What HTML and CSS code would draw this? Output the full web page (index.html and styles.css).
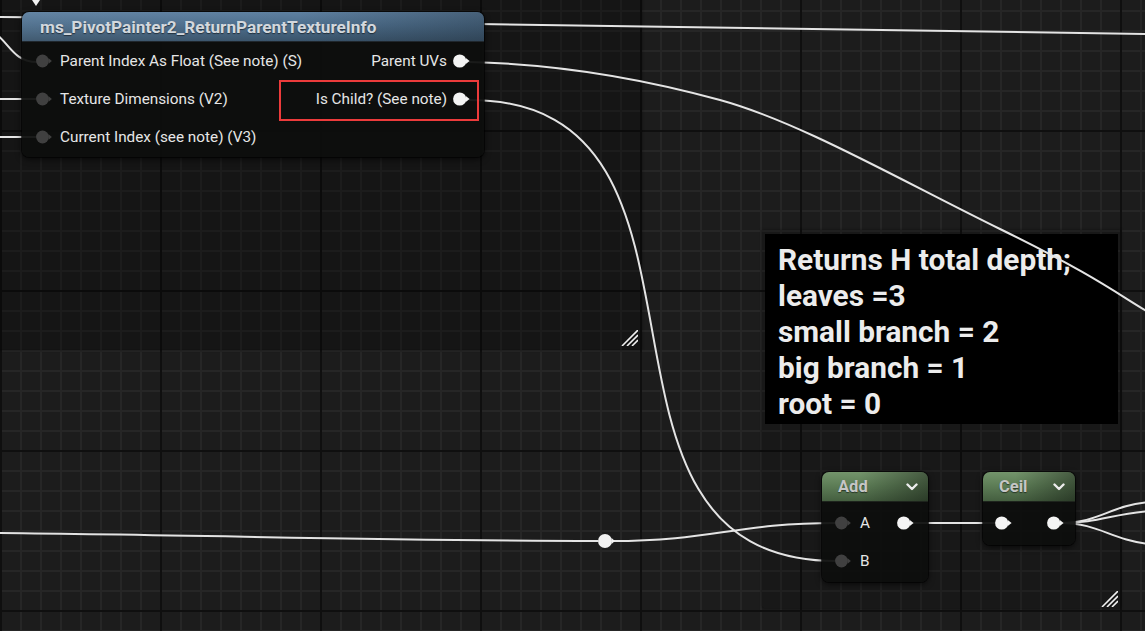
FILE: index.html
```html
<!DOCTYPE html>
<html>
<head>
<meta charset="utf-8">
<link rel="stylesheet" href="styles.css">
</head>
<body>
<div class="graph">
  <div class="comment comment-main">
    <svg class="resize" width="17" height="16" viewBox="0 0 17 16"><g stroke="#f2f2f2" stroke-width="1.6"><line x1="1" y1="16" x2="17" y2="0"/><line x1="6" y1="16" x2="17" y2="5"/><line x1="11" y1="16" x2="17" y2="10"/></g></svg>
  </div>
  <div class="comment comment-depth">
    <div class="comment-title">Returns H total depth;<br>leaves =3<br>small branch = 2<br>big branch = 1<br>root = 0</div>
    <svg class="resize" width="17" height="16" viewBox="0 0 17 16"><g stroke="#f2f2f2" stroke-width="1.6"><line x1="1" y1="16" x2="17" y2="0"/><line x1="6" y1="16" x2="17" y2="5"/><line x1="11" y1="16" x2="17" y2="10"/></g></svg>
  </div>

  <svg class="wires" width="1145" height="631" viewBox="0 0 1145 631">
    <g fill="none" stroke="#e4e4e4" stroke-width="2">
      <path d="M-10 17 C 300 18, 600 27, 1150 34"/>
      <path d="M-6 32 C 10 44, 14 62, 37 62"/>
      <path d="M-10 99 L37 99"/>
      <path d="M-10 137 L37 137"/>
      <path d="M469 62 C 560 64, 640 78, 720 100 S 900 180, 1000 229 S 1120 296, 1150 313"/>
      <path d="M469 100 C 753 100, 551 561, 836 561"/>
      <path d="M-10 533 C 200 535, 400 541, 598 541"/>
      <path d="M612 541 C 712 541, 736 523, 836 523"/>
      <path d="M911 523 L996 523"/>
      <path d="M1060 523 C 1100 523, 1110 505, 1150 502"/>
      <path d="M1060 523 C 1100 523, 1110 514, 1150 511"/>
      <path d="M1060 523 C 1100 523, 1110 540, 1150 544"/>
    </g>
    <path d="M32 0 L40 0 L36 6 Z" fill="#f0f0f0"/>
  </svg>

  <div class="node node-texinfo">
    <div class="node-header header-blue">ms_PivotPainter2_ReturnParentTextureInfo</div>
    <div class="node-body">
      <div class="row">
        <div class="pin-in"><svg class="pin" width="17" height="14" viewBox="0 0 17 14"><circle cx="6.5" cy="7" r="6.4" fill="#404040"/><path d="M12.6 4.2 L15.9 7 L12.6 9.8 Z" fill="#404040"/></svg><span class="label">Parent Index As Float (See note) (S)</span></div>
        <div class="pin-out"><span class="label">Parent UVs</span><svg class="pin" width="18" height="14" viewBox="0 0 18 14"><circle cx="6.7" cy="7" r="6.6" fill="#f4f4f4"/><path d="M12.8 4 L16.6 7 L12.8 10 Z" fill="#f4f4f4"/></svg></div>
      </div>
      <div class="row">
        <div class="pin-in"><svg class="pin" width="17" height="14" viewBox="0 0 17 14"><circle cx="6.5" cy="7" r="6.4" fill="#404040"/><path d="M12.6 4.2 L15.9 7 L12.6 9.8 Z" fill="#404040"/></svg><span class="label">Texture Dimensions (V2)</span></div>
        <div class="pin-out"><span class="label">Is Child? (See note)</span><svg class="pin" width="18" height="14" viewBox="0 0 18 14"><circle cx="6.7" cy="7" r="6.6" fill="#f4f4f4"/><path d="M12.8 4 L16.6 7 L12.8 10 Z" fill="#f4f4f4"/></svg></div>
      </div>
      <div class="row">
        <div class="pin-in"><svg class="pin" width="17" height="14" viewBox="0 0 17 14"><circle cx="6.5" cy="7" r="6.4" fill="#404040"/><path d="M12.6 4.2 L15.9 7 L12.6 9.8 Z" fill="#404040"/></svg><span class="label">Current Index (see note) (V3)</span></div>
      </div>
    </div>
  </div>

  <div class="highlight"></div>

  <div class="node node-add">
    <div class="node-header header-green"><span>Add</span><svg class="chev" width="12" height="8" viewBox="0 0 12 8"><path d="M1.5 1.5 L6 6 L10.5 1.5" fill="none" stroke="#ececec" stroke-width="2.4" stroke-linecap="round" stroke-linejoin="round"/></svg></div>
    <div class="node-body small-body">
      <div class="row small-row">
        <div class="pin-in"><svg class="pin" width="17" height="14" viewBox="0 0 17 14"><circle cx="6.5" cy="7" r="6.4" fill="#404040"/><path d="M12.6 4.2 L15.9 7 L12.6 9.8 Z" fill="#404040"/></svg><span class="label">A</span></div>
        <div class="pin-out"><svg class="pin" width="18" height="14" viewBox="0 0 18 14"><circle cx="6.7" cy="7" r="6.6" fill="#f4f4f4"/><path d="M12.8 4 L16.6 7 L12.8 10 Z" fill="#f4f4f4"/></svg></div>
      </div>
      <div class="row small-row">
        <div class="pin-in"><svg class="pin" width="17" height="14" viewBox="0 0 17 14"><circle cx="6.5" cy="7" r="6.4" fill="#404040"/><path d="M12.6 4.2 L15.9 7 L12.6 9.8 Z" fill="#404040"/></svg><span class="label">B</span></div>
      </div>
    </div>
  </div>

  <div class="node node-ceil">
    <div class="node-header header-green"><span>Ceil</span><svg class="chev" width="12" height="8" viewBox="0 0 12 8"><path d="M1.5 1.5 L6 6 L10.5 1.5" fill="none" stroke="#ececec" stroke-width="2.4" stroke-linecap="round" stroke-linejoin="round"/></svg></div>
    <div class="node-body small-body">
      <div class="row small-row">
        <div class="pin-in"><svg class="pin" width="18" height="14" viewBox="0 0 18 14"><circle cx="6.7" cy="7" r="6.6" fill="#f4f4f4"/><path d="M12.8 4 L16.6 7 L12.8 10 Z" fill="#f4f4f4"/></svg></div>
        <div class="pin-out"><svg class="pin" width="18" height="14" viewBox="0 0 18 14"><circle cx="6.7" cy="7" r="6.6" fill="#f4f4f4"/><path d="M12.8 4 L16.6 7 L12.8 10 Z" fill="#f4f4f4"/></svg></div>
      </div>
    </div>
  </div>

  <svg class="reroute" width="20" height="16" viewBox="0 0 20 16"><circle cx="8" cy="8" r="7" fill="#f2f2f2"/><path d="M14.5 5 L18 8 L14.5 11 Z" fill="#f2f2f2"/></svg>
</div>
</body>
</html>
```

FILE: styles.css
```css
* { box-sizing: border-box; }

body {
  margin: 0;
  background: #1c1c1c;
  font-family: Roboto, "Liberation Sans", sans-serif;
}

.graph {
  position: relative;
  width: 1145px;
  height: 631px;
  overflow: hidden;
  background-color: #1c1c1c;
  background-image:
    linear-gradient(to right, #0f0f0f 0 2px, transparent 2px),
    linear-gradient(to bottom, #0f0f0f 0 2px, transparent 2px),
    linear-gradient(to right, #262626 0 2px, transparent 2px),
    linear-gradient(to bottom, #262626 0 2px, transparent 2px);
  background-size: 160px 160px, 160px 160px, 20px 20px, 20px 20px;
  background-position: 0 0, 0 130px, 0 0, 0 10px;
}

/* comments */
.comment {
  position: absolute;
  border-radius: 2px;
}

.comment-main {
  left: -10px;
  top: -10px;
  width: 652px;
  height: 359px;
  background: rgba(0, 0, 0, 0.24);
  box-shadow: 0 1px 3px rgba(0, 0, 0, 0.45);
}

.comment-depth {
  left: 762px;
  top: 230px;
  width: 359px;
  height: 378px;
  padding: 4px 3px 0 3px;
  background: rgba(0, 0, 0, 0.14);
  box-shadow: 0 0 3px rgba(0, 0, 0, 0.5);
}

.comment-title {
  background: #000;
  height: 190px;
  padding: 8px 13px 0;
  color: #ececec;
  font-weight: 700;
  font-size: 29.8px;
  line-height: 36px;
  white-space: nowrap;
}

.resize {
  position: absolute;
  display: block;
}

.comment-main .resize { right: 4px; bottom: 3px; }
.comment-depth .resize { right: 3px; bottom: 1px; }

/* wires */
.wires {
  position: absolute;
  left: 0;
  top: 0;
  display: block;
}

/* nodes */
.node {
  position: absolute;
  border-radius: 7px;
  background: rgba(13, 14, 13, 0.94);
  box-shadow: 0 2px 6px rgba(0, 0, 0, 0.7), 0 0 0 1px rgba(0, 0, 0, 0.6);
  overflow: hidden;
  color: #e4e4e4;
}

.node-texinfo {
  left: 22px;
  top: 12px;
  width: 462px;
  height: 145px;
}

.node-add {
  left: 822px;
  top: 472px;
  width: 106px;
  height: 110px;
}

.node-ceil {
  left: 983px;
  top: 472px;
  width: 92px;
  height: 73px;
}

.node-header {
  height: 30px;
  display: flex;
  align-items: center;
  font-weight: 700;
  text-shadow: 0 1px 1px rgba(0, 0, 0, 0.5);
}

.header-blue {
  padding-left: 18px;
  font-size: 17.2px;
  color: #d3d8dd;
  background:
    linear-gradient(to right, rgba(255,255,255,0.04) 0%, rgba(255,255,255,0) 60%, rgba(30,40,50,0.35) 100%),
    linear-gradient(to bottom, #5e80a0 0%, #4d6e8c 45%, #3a546b 100%);
  border-bottom: 1px solid #20272d;
}

.header-green {
  justify-content: space-between;
  padding: 0 10px 0 16px;
  font-size: 16.5px;
  color: #c6c6c6;
  background:
    linear-gradient(to right, rgba(0,0,0,0) 35%, rgba(0,0,0,0.38) 100%),
    linear-gradient(to bottom, #73946b 0%, #5e7e57 45%, #455f40 100%);
  border-bottom: 1px solid #1e241d;
}

.chev { display: block; flex-shrink: 0; }

.node-body {
  display: flex;
  flex-direction: column;
}

.row {
  height: 38px;
  display: flex;
  align-items: center;
  justify-content: space-between;
  padding: 0 13px 0 14px;
}

.pin-in, .pin-out {
  display: flex;
  align-items: center;
  flex-shrink: 0;
}

.pin { display: block; flex-shrink: 0; }

.pin-in .label { margin-left: 7px; }
.pin-out .label { margin-right: 6px; }

.label {
  font-size: 15.3px;
  color: #e6e6e6;
  white-space: nowrap;
}

.small-body { padding-top: 2px; }

.node-add .row { padding: 0 13px 0 13px; }
.node-add .pin-in .label { margin-left: 8px; }
.node-ceil .row { padding: 0 10px 0 12px; }

/* highlight box */
.highlight {
  position: absolute;
  left: 279px;
  top: 80px;
  width: 200px;
  height: 41px;
  border: 2px solid #ec3b3b;
}

.reroute {
  position: absolute;
  left: 597px;
  top: 533px;
  display: block;
}
```
